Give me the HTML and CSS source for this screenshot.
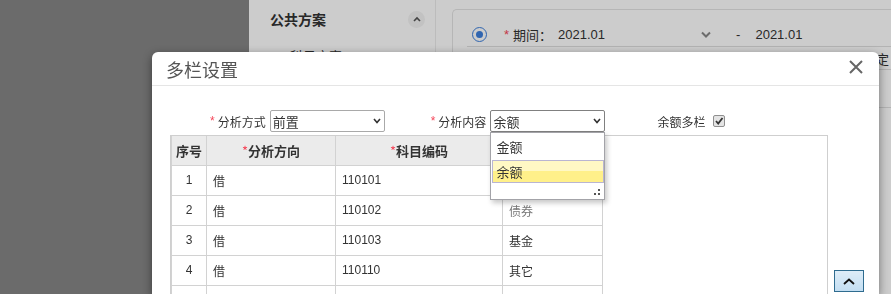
FILE: index.html
```html
<!DOCTYPE html>
<html>
	<head>
		<meta charset="UTF-8">
		<title>多栏设置</title>
		<link rel="stylesheet" href="styles.css">
	</head>
	<body>
		<div class="page">
			<div class="nav"></div>
			<div class="side">
				<div class="side-item">
					<span>公共方案</span>
					<span class="fold"><svg width="8" height="6" viewBox="0 0 8 6"><path d="M1 5 L4 2 L7 5" fill="none" stroke="#555" stroke-width="1.6"/></svg></span>
				</div>
				<div class="side-sub">科目方案</div>
			</div>
			<div class="main">
				<div class="card">
					<div class="period">
						<span class="radio"><i></i></span>
						<span class="req">*</span>
						<span class="plabel">期间：</span>
						<span class="pval">2021.01<svg width="10" height="7" viewBox="0 0 10 7"><path d="M1 1.5 L5 5.5 L9 1.5" fill="none" stroke="#888" stroke-width="2"/></svg></span>
						<span class="dash">-</span>
						<span class="pval2">2021.01</span>
					</div>
					<div class="crow"><span>指定</span></div>
					<div class="crow tall"></div>
				</div>
			</div>
		</div>

		<div class="mask"></div>

		<div class="dialog">
			<div class="dlg-head">
				<span class="dlg-title">多栏设置</span>
				<svg class="dlg-close" width="14" height="14" viewBox="0 0 14 14"><path d="M1 1 L13 13 M13 1 L1 13" stroke="#666" stroke-width="2"/></svg>
			</div>
			<div class="dlg-body">
				<div class="form-row">
					<div class="field">
						<span class="req">*</span><span class="lbl">分析方式</span>
						<div class="sel">
							<span>前置</span>
							<svg width="8" height="6" viewBox="0 0 8 6"><path d="M1 1 L4 4.5 L7 1" fill="none" stroke="#333" stroke-width="1.6"/></svg>
						</div>
					</div>
					<div class="field f2">
						<span class="req">*</span><span class="lbl">分析内容</span>
						<div class="sel open">
							<span>余额</span>
							<svg width="8" height="6" viewBox="0 0 8 6"><path d="M1 1 L4 4.5 L7 1" fill="none" stroke="#333" stroke-width="1.6"/></svg>
							<div class="drop">
								<div class="opt">金额</div>
								<div class="opt on">余额</div>
								<svg class="grip" width="6" height="6" viewBox="0 0 6 6"><rect x="4" y="0" width="2" height="2" fill="#555"/><rect x="0" y="4" width="2" height="2" fill="#555"/><rect x="4" y="4" width="2" height="2" fill="#555"/></svg>
							</div>
						</div>
					</div>
					<div class="field f3">
						<span class="lbl">余额多栏</span>
						<span class="chk"><svg width="10" height="10" viewBox="0 0 10 10"><path d="M2 5 L4.2 7.5 L8.5 2" fill="none" stroke="#333" stroke-width="1.8"/></svg></span>
					</div>
				</div>

				<div class="grid-wrap">
					<table class="grid">
						<thead>
							<tr>
								<th class="c1">序号</th>
								<th class="c2"><span class="star">*</span>分析方向</th>
								<th class="c3"><span class="star">*</span>科目编码</th>
								<th class="c4"></th>
							</tr>
						</thead>
						<tbody>
							<tr><td class="c1">1</td><td>借</td><td>110101</td><td></td></tr>
							<tr><td class="c1">2</td><td>借</td><td>110102</td><td class="dim">债券</td></tr>
							<tr><td class="c1">3</td><td>借</td><td>110103</td><td>基金</td></tr>
							<tr><td class="c1">4</td><td>借</td><td>110110</td><td>其它</td></tr>
							<tr><td class="c1"></td><td></td><td></td><td></td></tr>
						</tbody>
					</table>
				</div>
			</div>
			<a href="javascript:;" class="to-top"><svg width="12" height="7" viewBox="0 0 12 7"><path d="M1 6 L6 1.5 L11 6" fill="none" stroke="#111" stroke-width="1.8"/></svg></a>
		</div>
	</body>
</html>
```

FILE: styles.css
```css
* { margin:0; padding:0; box-sizing:border-box; }
body {
	font-family:"Liberation Sans", "Noto Sans CJK SC", sans-serif;
	font-size:12px;
	color:#333;
	background:#fff;
	height:294px;
	overflow:hidden;
}

/* page behind the dialog */
.page {
	display:flex;
	height:294px;
}
.nav {
	width:249px;
	background:#868686;
}
.side {
	width:187px;
	border-right:1px solid #ececec;
	background:#fff;
}
.side-item {
	height:38px;
	display:flex;
	align-items:center;
	justify-content:space-between;
	padding:0 10px 0 21px;
	font-size:14px;
	font-weight:bold;
	font-family:"Noto Sans CJK SC", sans-serif;
}
.fold {
	width:17px;
	height:17px;
	border-radius:50%;
	background:#f3f3f3;
	display:flex;
	align-items:center;
	justify-content:center;
}
.side-sub {
	padding:8px 0 0 41px;
	font-size:13px;
}
.main {
	flex:1;
	padding:9px 0 0 16px;
}
.card {
	height:285px;
	border:1px solid #e4e4e4;
	border-right:none;
	border-bottom:none;
	border-radius:5px 0 0 0;
}
.period {
	height:37px;
	margin-left:14px;
	border-bottom:1px solid #e0e0e0;
	display:flex;
	align-items:center;
	padding-top:12px;
	font-size:13px;
}
.radio {
	width:15px;
	height:15px;
	margin-left:5px;
	border:1.5px solid #3d7fdc;
	border-radius:50%;
	display:flex;
	align-items:center;
	justify-content:center;
}
.radio i {
	width:7px;
	height:7px;
	border-radius:50%;
	background:#3d7fdc;
}
.period .req { margin-left:17px; margin-right:4px; }
.pval {
	width:155px;
	margin-left:6px;
	display:flex;
	align-items:center;
	justify-content:space-between;
	padding-right:2px;
}
.dash { margin-left:23px; }
.pval2 { margin-left:15px; }
.crow {
	height:23px;
	border-bottom:1px solid #e0e0e0;
	display:flex;
	justify-content:flex-end;
	align-items:center;
	padding-right:2px;
	font-size:13px;
}
.crow.tall { height:38px; }

.mask {
	position:fixed;
	left:0; top:0; right:0; bottom:0;
	background:rgba(0,0,0,0.2);
}

/* dialog */
.dialog {
	position:absolute;
	left:152px;
	top:52px;
	width:727px;
	height:242px;
	background:#fff;
	border-radius:6px 6px 0 0;
	box-shadow:0 3px 10px rgba(0,0,0,0.45);
}
.dlg-head {
	height:34px;
	border-bottom:1px solid #e5e5e5;
	display:flex;
	align-items:center;
	justify-content:space-between;
	padding:0 16px 0 14px;
}
.dlg-title {
	font-size:18px;
	color:#555;
	font-family:"Noto Sans CJK SC", sans-serif;
}
.dlg-close { margin-bottom:3px; }
.dlg-body {
	padding:24px 0 0 18px;
}
.form-row {
	display:flex;
	align-items:center;
	height:22px;
	padding-left:40px;
}
.field {
	display:flex;
	align-items:center;
}
.f2 { margin-left:46px; }
.f3 { margin-left:52px; }
.req {
	color:#f5475a;
	margin-right:3px;
}
.lbl {
	margin-right:4px;
	font-family:"Noto Sans CJK SC", sans-serif;
}
.f3 .lbl { margin-right:8px; }
.sel {
	width:115px;
	height:22px;
	border:1px solid #a9a9a9;
	border-radius:2px;
	display:flex;
	align-items:center;
	justify-content:space-between;
	padding:0 3px 0 2px;
	font-size:13px;
	font-family:"Noto Sans CJK SC", sans-serif;
}
.sel.open {
	position:relative;
	border-color:#808080;
}
.drop {
	position:absolute;
	top:21px;
	left:-1px;
	width:115px;
	height:68px;
	border:1px solid #a3a3a8;
	background:#fff;
	padding:0 0 0 1px;
	box-shadow:2px 3px 5px rgba(0,0,0,0.22);
	z-index:3;
}
.opt {
	height:27px;
	line-height:27px;
	padding-left:4px;
}
.opt.on {
	height:23px;
	line-height:21px;
	padding-left:3px;
	border:1px solid #b9b5d2;
	background:linear-gradient(#fff8c4 50%, #fff08a 50%);
}
.grip {
	position:absolute;
	right:4px;
	bottom:4px;
}
.chk {
	width:12px;
	height:12px;
	border:1px solid #8f8f8f;
	border-radius:2px;
	background:#e4e4e4;
	display:flex;
	align-items:center;
	justify-content:center;
}

.grid-wrap {
	width:658px;
	height:159px;
	margin-top:3px;
	border:1px solid #cfcfcf;
	border-bottom:none;
	overflow:hidden;
}
.grid {
	border-collapse:collapse;
	font-family:"Liberation Sans", "Noto Sans CJK SC", sans-serif;
}
.grid th, .grid td {
	border:1px solid #d2d2d2;
	height:30px;
	padding:0 6px;
	text-align:left;
	font-size:12px;
}
.grid th {
	border-top:none;
	height:29px;
	background:#ebebeb;
	font-size:13px;
	text-align:center;
	font-family:"Noto Sans CJK SC", sans-serif;
}
.grid .c1 { width:35px; padding:0; text-align:center; }
.grid .c2 { width:129px; }
.grid .c3 { width:167px; }
.grid .c4 { width:100px; }
.star {
	color:#f5475a;
	font-weight:normal;
}
.dim { color:#777; }

.to-top {
	position:absolute;
	left:682px;
	top:218px;
	width:30px;
	height:22px;
	border:1px solid #2f6c8f;
	background:linear-gradient(#deedf8, #c3def2);
	display:flex;
	align-items:center;
	justify-content:center;
}
```
